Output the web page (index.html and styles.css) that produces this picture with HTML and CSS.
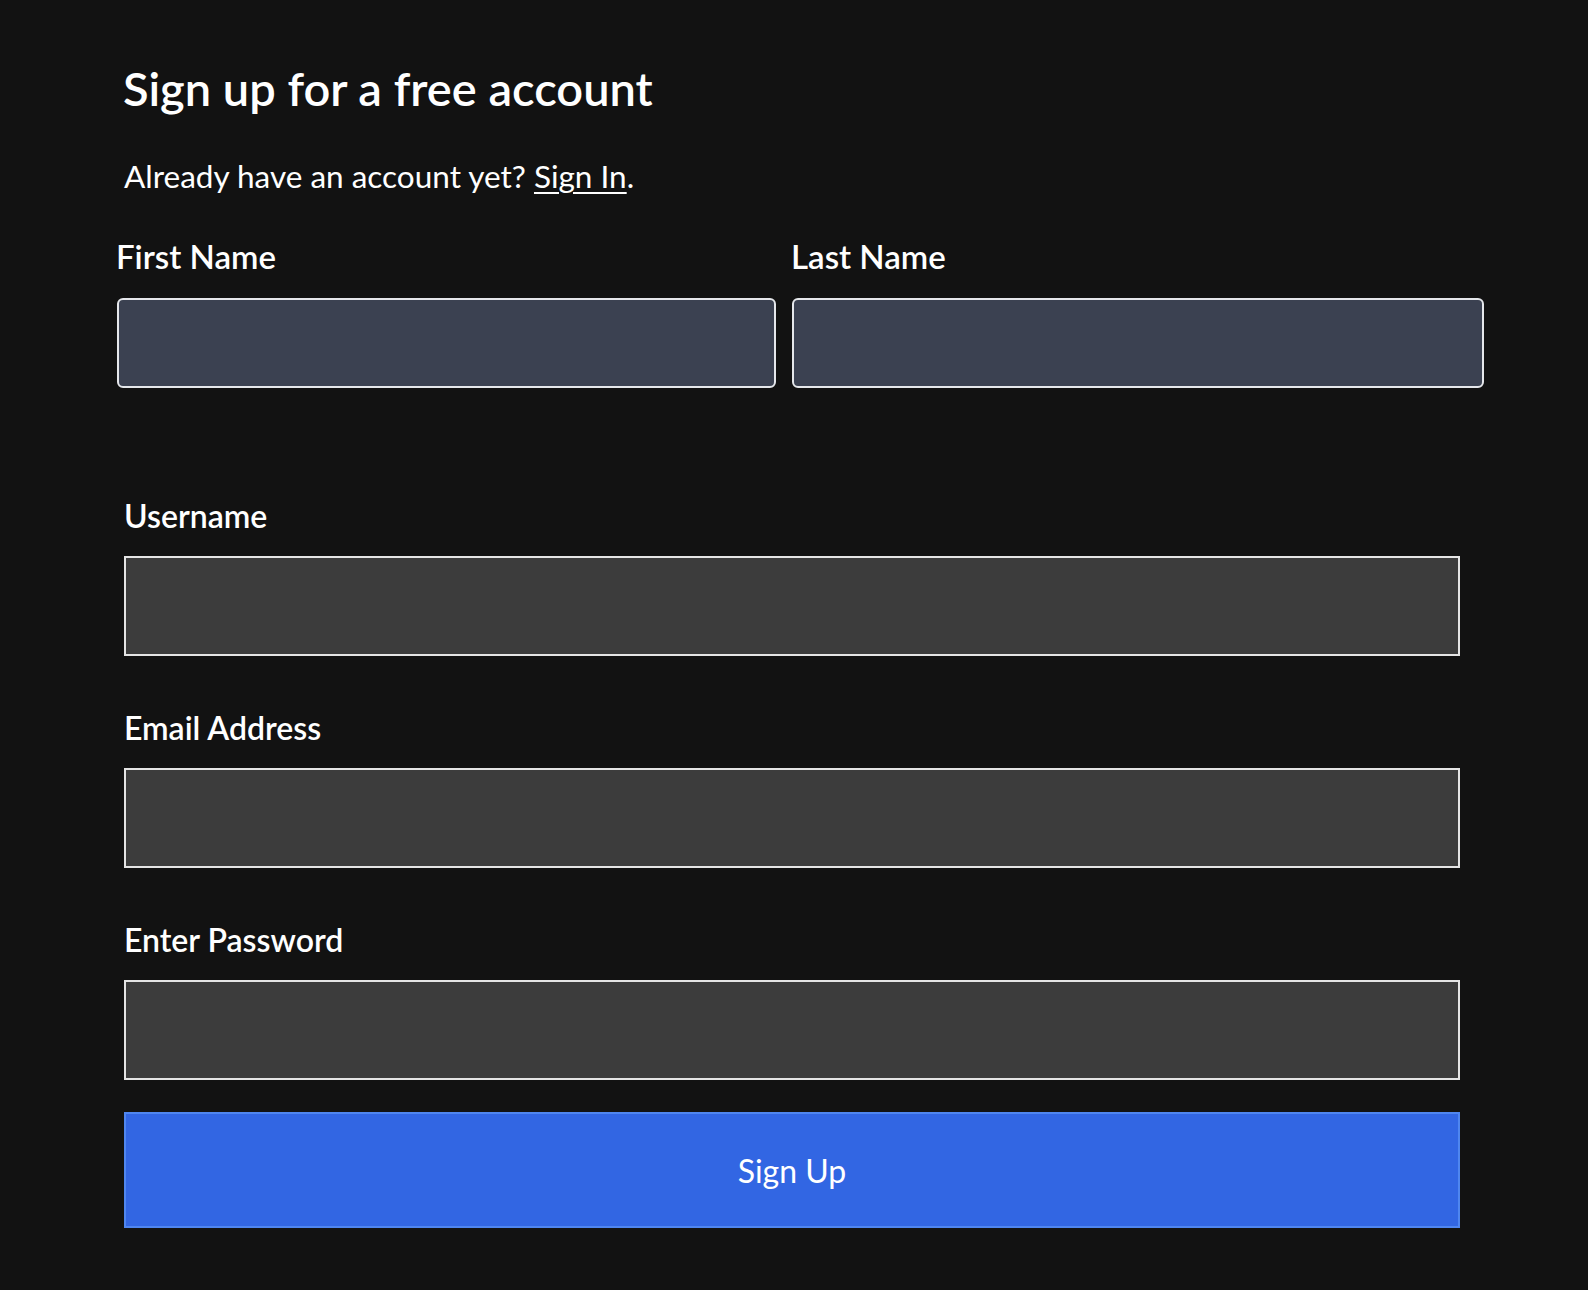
FILE: index.html
```html
<!DOCTYPE html>
<html lang="en">
<head>
<meta charset="utf-8">
<title>Sign up</title>
<link rel="stylesheet" href="styles.css">
</head>
<body>
<main class="page">
  <h1 class="title">Sign up for a free account</h1>
  <p class="subtitle">Already have an account yet? <a href="#" class="link">Sign In</a>.</p>
  <form class="form">
    <div class="name-row">
      <div class="field field-first">
        <label class="label">First Name</label>
        <input class="input input-name" type="text">
      </div>
      <div class="field field-last">
        <label class="label">Last Name</label>
        <input class="input input-name" type="text">
      </div>
    </div>
    <div class="field field-wide">
      <label class="label">Username</label>
      <input class="input input-wide" type="text">
    </div>
    <div class="field field-wide">
      <label class="label">Email Address</label>
      <input class="input input-wide" type="email">
    </div>
    <div class="field field-wide field-last-wide">
      <label class="label">Enter Password</label>
      <input class="input input-wide" type="password">
    </div>
    <button class="submit" type="button">Sign Up</button>
  </form>
</main>
</body>
</html>
```

FILE: styles.css
```css
html, body {
  margin: 0;
  padding: 0;
  background: #121212;
}

body {
  font-family: "Lato", "Open Sans", sans-serif;
  color: #ffffff;
}

.page {
  width: 1336px;
  padding: 60px 0 0 124px;
}

.title {
  margin: 0 0 0 -1px;
  font-size: 47px;
  line-height: 56px;
  font-weight: 600;
}

.subtitle {
  margin: 41px 0 0 0;
  font-size: 31.5px;
  line-height: 38px;
  font-weight: 400;
}

.link {
  color: #ffffff;
  text-decoration: underline;
  text-decoration-thickness: 2px;
  text-underline-offset: 4px;
}

.form {
  margin-top: 42px;
  display: flex;
  flex-direction: column;
}

.name-row {
  display: flex;
  gap: 16px;
  width: 1367px;
  margin-left: -7px;
  margin-bottom: 109px;
}

.field {
  display: flex;
  flex-direction: column;
}

.field-first { flex: 0 0 659px; }
.field-last { flex: 0 0 692px; }

.field-wide {
  margin-bottom: 53px;
}

.field-last-wide {
  margin-bottom: 0;
}

.label {
  font-size: 32px;
  line-height: 38px;
  font-weight: 600;
  margin-bottom: 21px;
}

.name-row .label {
  font-size: 33px;
  margin-bottom: 23px;
  margin-left: -1px;
}

.input {
  box-sizing: border-box;
  margin: 0;
  outline: none;
  font: inherit;
  color: #ffffff;
}

.input-name {
  width: 100%;
  height: 90px;
  background: #3b4151;
  border: 2px solid #e5e7eb;
  border-radius: 6px;
}

.input-wide {
  width: 1336px;
  height: 100px;
  background: #3c3c3c;
  border: 2px solid #e5e5e5;
  border-radius: 0;
}

.submit {
  margin-top: 32px;
  width: 1336px;
  height: 116px;
  box-sizing: border-box;
  background: #3266e3;
  border: 2px solid #4f86f0;
  color: #ffffff;
  font-family: "Lato", sans-serif;
  font-size: 32px;
  font-weight: 400;
  cursor: pointer;
}
```
